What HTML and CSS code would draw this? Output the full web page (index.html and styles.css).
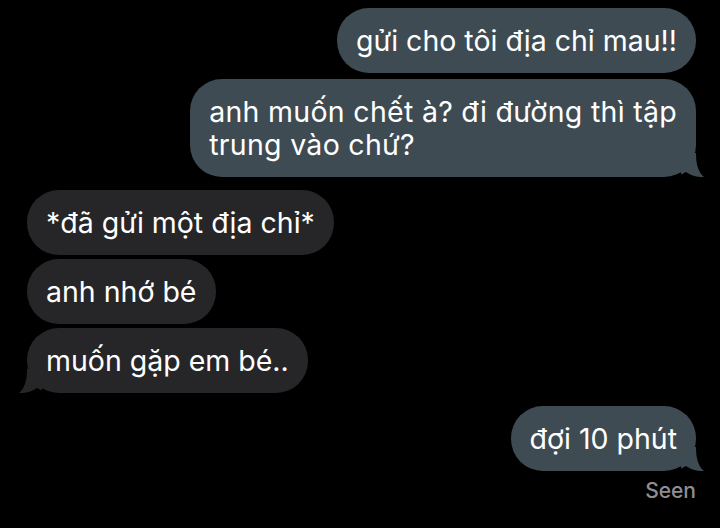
FILE: index.html
```html
<!DOCTYPE html>
<html lang="vi">
<head>
<meta charset="utf-8">
<link rel="stylesheet" href="styles.css">
</head>
<body>
<div class="chat">
  <div class="row sent">
    <div class="bubble out">gửi cho tôi địa chỉ mau!!</div>
  </div>
  <div class="row sent tight1">
    <div class="bubble out long">anh muốn chết à? đi đường thì tập<br>trung vào chứ?
      <svg class="tail tail-r" viewBox="0 0 24 24"><path d="M0,0 H15 C15,11 17,19 23,24 C17,24.5 10,22.5 5,19 C3,20 1,21 0,21.5 Z"/></svg>
    </div>
  </div>
  <div class="row recv group">
    <div class="bubble in">*đã gửi một địa chỉ*</div>
  </div>
  <div class="row recv tight">
    <div class="bubble in">anh nhớ bé</div>
  </div>
  <div class="row recv tight">
    <div class="bubble in">muốn gặp em bé..
      <svg class="tail tail-l" viewBox="0 0 24 24"><path d="M0,0 H15 C15,11 17,19 23,24 C17,24.5 10,22.5 5,19 C3,20 1,21 0,21.5 Z"/></svg>
    </div>
  </div>
  <div class="row sent group">
    <div class="bubble out">đợi 10 phút
      <svg class="tail tail-r" viewBox="0 0 24 24"><path d="M0,0 H15 C15,11 17,19 23,24 C17,24.5 10,22.5 5,19 C3,20 1,21 0,21.5 Z"/></svg>
    </div>
  </div>
  <div class="seen">Seen</div>
</div>
</body>
</html>
```
FILE: styles.css
```css
html, body {
  margin: 0;
  padding: 0;
  background: #000;
}
body {
  width: 720px;
  height: 528px;
  overflow: hidden;
  font-family: Inter, Roboto, "Noto Sans", sans-serif;
  color: #fff;
}
.chat {
  display: flex;
  flex-direction: column;
  padding: 8px 24px 0 27px;
}
.row {
  display: flex;
}
.row.sent { justify-content: flex-end; }
.row.recv { justify-content: flex-start; }
.row.tight { margin-top: 4px; }
.row.tight1 { margin-top: 6px; }
.row.group { margin-top: 13px; }
.bubble {
  position: relative;
  font-size: 28.5px;
  line-height: 33px;
  padding: 16px 19px;
  border-radius: 32px;
  white-space: nowrap;
}
.bubble.long { letter-spacing: 0.3px; }
.bubble.out { background: #3e4b53; }
.bubble.in { background: #262628; }
.bubble.out .tail { fill: #3e4b53; }
.bubble.in .tail { fill: #262628; }
.tail {
  position: absolute;
  bottom: 0;
  width: 24px;
  height: 24px;
}
.tail-r { right: -9px; }
.tail-l { left: -9px; transform: scaleX(-1); }
.seen {
  align-self: flex-end;
  margin-top: 8px;
  font-size: 21px;
  line-height: 24px;
  color: #8e8e93;
  font-weight: 500;
}
```
